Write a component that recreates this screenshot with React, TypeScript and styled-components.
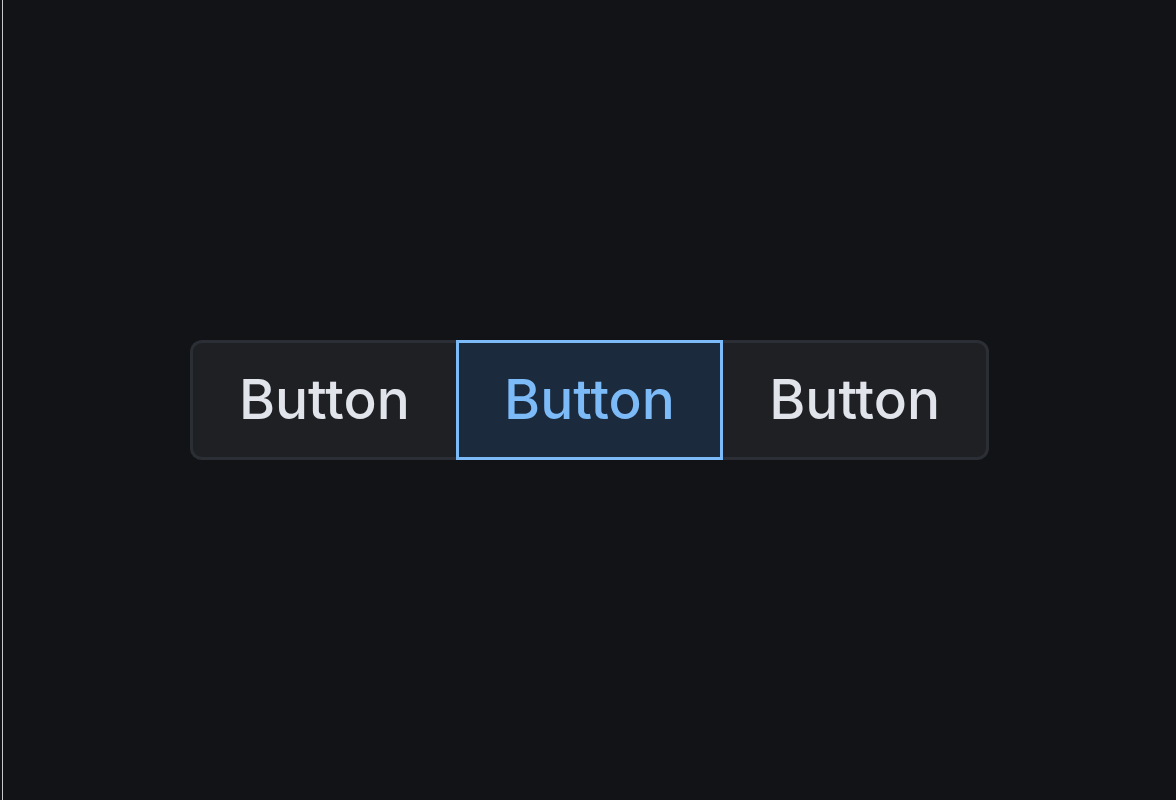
import { createGlobalStyle } from "styled-components"
import styled, { css } from "styled-components"

const GlobalStyle = createGlobalStyle`
  html, body {
    margin: 0;
    padding: 0;
    height: 100%;
    background: #121317;
  }

  body {
    box-sizing: border-box;
    border-left: 2px solid #121317;
    font-family: Inter, "Noto Sans", sans-serif;
  }

  #root {
    height: 100%;
  }
`

const Page = styled.main`
  height: 100%;
  display: flex;
  align-items: center;
  justify-content: center;
  border-left: 1px solid #c8c9cc;
`

const Group = styled.div`
  display: flex;
  width: 800px;
  height: 120px;
  box-sizing: border-box;
`

type SegmentProps = {
  $selected?: boolean;
}

const Segment = styled.button<SegmentProps>`
  flex: 0 0 calc(100% / 3);
  box-sizing: border-box;
  margin: 0;
  padding: 0 0 2px;
  background: #1e2024;
  border: 3px solid #2b2e34;
  border-left: none;
  border-right: none;
  color: #e2e4ec;
  font-family: inherit;
  font-size: 55px;
  font-weight: 500;
  cursor: pointer;

  &:first-child {
    border-left: 3px solid #2b2e34;
    border-radius: 12px 0 0 12px;
  }

  &:last-child {
    border-right: 3px solid #2b2e34;
    border-radius: 0 12px 12px 0;
  }

  ${({ $selected }) => $selected && css`
    background: #1b2a3c;
    border: 3px solid #7cbbf8;
    color: #7cbbf8;
  `}
`

const options = ["Button", "Button", "Button"]

export default function App() {
  return (
    <>
      <GlobalStyle />
      <Page>
        <Group>
          {options.map((label, i) => (
            <Segment key={i} $selected={i === 1}>
              {label}
            </Segment>
          ))}
        </Group>
      </Page>
    </>
  )
}
